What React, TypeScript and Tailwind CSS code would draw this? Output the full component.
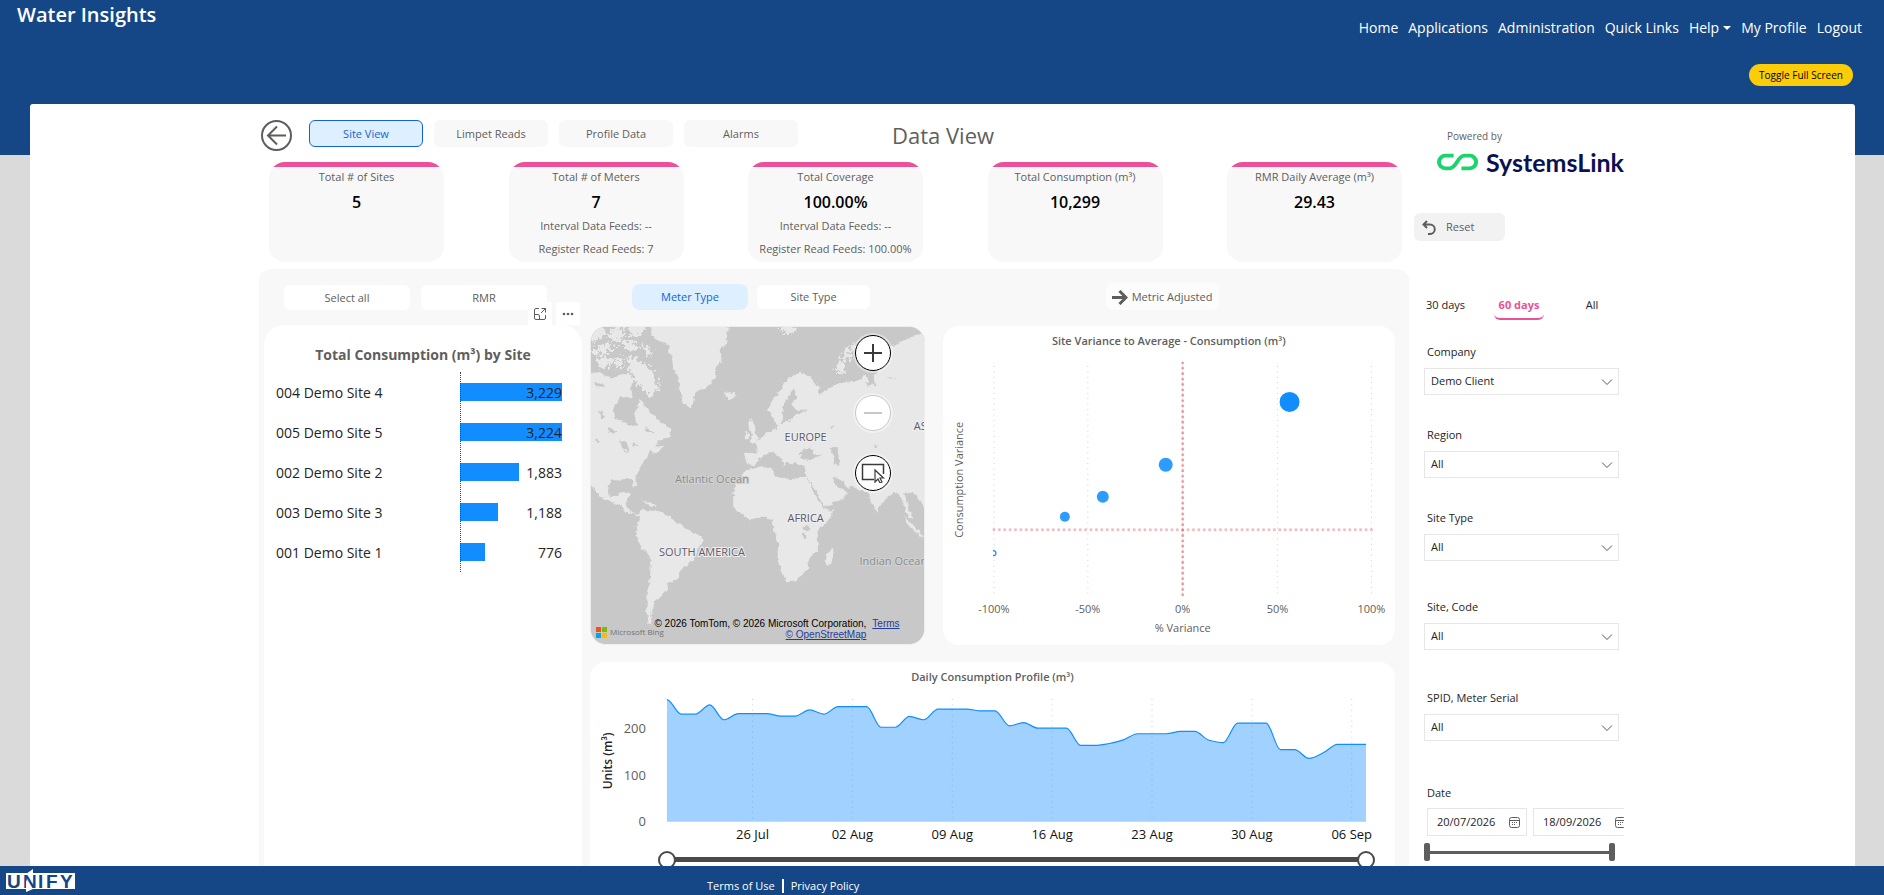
import type { ReactNode } from "react";

type Kpi = {
  title: string;
  value: string;
  lines?: { label: string; value: string }[];
};

const navLinks = ["Home", "Applications", "Administration", "Quick Links", "Help", "My Profile", "Logout"];

const tabs = ["Site View", "Limpet Reads", "Profile Data", "Alarms"];

const kpis: Kpi[] = [
  { title: "Total # of Sites", value: "5" },
  {
    title: "Total # of Meters",
    value: "7",
    lines: [
      { label: "Interval Data Feeds:", value: "--" },
      { label: "Register Read Feeds:", value: "7" },
    ],
  },
  {
    title: "Total Coverage",
    value: "100.00%",
    lines: [
      { label: "Interval Data Feeds:", value: "--" },
      { label: "Register Read Feeds:", value: "100.00%" },
    ],
  },
  { title: "Total Consumption (m³)", value: "10,299" },
  { title: "RMR Daily Average (m³)", value: "29.43" },
];

const sites = [
  { name: "004 Demo Site 4", value: 3229 },
  { name: "005 Demo Site 5", value: 3224 },
  { name: "002 Demo Site 2", value: 1883 },
  { name: "003 Demo Site 3", value: 1188 },
  { name: "001 Demo Site 1", value: 776 },
];

const points = [
  { x: 347, y: 76, r: 10, opacity: 1 },
  { x: 223, y: 139, r: 7, opacity: 0.88 },
  { x: 160, y: 171, r: 6, opacity: 0.88 },
  { x: 122, y: 191, r: 5, opacity: 0.88 },
];

const xTicks = [
  { x: 51, label: "-100%" },
  { x: 145, label: "-50%" },
  { x: 240, label: "0%" },
  { x: 335, label: "50%" },
  { x: 429, label: "100%" },
];

// one reading per day, 20 Jul - 07 Sep
const daily = [
  262, 231, 231, 251, 219, 232, 232, 232, 227, 227, 240, 231, 247, 247, 247, 203, 203, 226, 219, 242,
  242, 242, 238, 238, 206, 213, 201, 201, 201, 164, 164, 168, 176, 189, 189, 189, 194, 194, 175, 170,
  212, 212, 212, 155, 155, 136, 148, 166, 166, 166,
];

const weeks = ["26 Jul", "02 Aug", "09 Aug", "16 Aug", "23 Aug", "30 Aug", "06 Sep"];

const filters = [
  { id: "company", label: "Company", value: "Demo Client", space: "mt-[22px]" },
  { id: "region", label: "Region", value: "All", space: "mt-[30px]" },
  { id: "site-type", label: "Site Type", value: "All", space: "mt-[30px]" },
  { id: "site-code", label: "Site, Code", value: "All", space: "mt-[36px]" },
  { id: "spid", label: "SPID, Meter Serial", value: "All", space: "mt-[38px]" },
];

const X0 = 77;
const STEP = 100 / 7;
const BASE = 137;

function monotonePath(values: number[]) {
  const ys = values.map((v) => BASE - v * 0.4667);
  const slope = ys.map((y, i) => {
    if (i === 0 || i === ys.length - 1) return 0;
    const a = y - ys[i - 1];
    const b = ys[i + 1] - y;
    if (a * b <= 0) return 0;
    return (2 * a * b) / (a + b);
  });
  let d = `M${X0} ${ys[0].toFixed(1)}`;
  for (let i = 1; i < ys.length; i++) {
    const x1 = X0 + STEP * (i - 1);
    const x2 = X0 + STEP * i;
    const t = STEP / 3;
    d += `C${(x1 + t).toFixed(1)} ${(ys[i - 1] + slope[i - 1] / 3).toFixed(1)} ${(x2 - t).toFixed(1)} ${(
      ys[i] - slope[i] / 3
    ).toFixed(1)} ${x2.toFixed(1)} ${ys[i].toFixed(1)}`;
  }
  return d;
}

const linePath = monotonePath(daily);

function Header() {
  return (
    <header className="flex h-[104px] shrink-0 items-start justify-between pl-[17px] text-white">
      <h1 className="text-[20px] leading-[30px] font-semibold">Water Insights</h1>
      <div className="flex flex-col items-end pt-[18px]">
        <nav className="flex gap-[10px] pr-[22px] text-[14px] leading-5">
          {navLinks.map((link) => (
            <a key={link} href="#" className="flex items-center">
              {link}
              {link === "Help" && (
                <span className="ml-1 border-x-4 border-t-4 border-x-transparent border-t-white" />
              )}
            </a>
          ))}
        </nav>
        <button className="mt-[26px] mr-[31px] h-[22px] w-[104px] rounded-full bg-[#fbcc08] text-[10px] text-black">
          Toggle Full Screen
        </button>
      </div>
    </header>
  );
}

function Toolbar() {
  return (
    <div className="flex h-[31px] items-start pl-[2px]">
      <button aria-label="Back" className="mr-[17px]">
        <svg width="31" height="31" viewBox="0 0 31 31" fill="none" stroke="#5f5d5b" strokeWidth="2">
          <circle cx="15.5" cy="15.5" r="14.5" />
          <path d="M25 15.5H7M16 6.500L7 15.500L16 24.500" />
        </svg>
      </button>
      <div className="flex gap-[11px]">
        {tabs.map((tab, i) => (
          <button
            key={tab}
            className={
              i === 0
                ? "h-[27px] w-[114px] rounded-md border border-[#1264d6] bg-[#def0ff] pt-px text-[11px] text-[#1264d6]"
                : "h-[27px] w-[114px] rounded-md bg-[#f8f8f8] pt-px text-[11px] text-[#605e5c]"
            }
          >
            {tab}
          </button>
        ))}
      </div>
      <h2 className="ml-[94px] text-[22px] leading-[31px] text-[#605e5c]">Data View</h2>
    </div>
  );
}

function KpiCard({ kpi }: { kpi: Kpi }) {
  return (
    <div className="h-[100px] w-[175px] overflow-hidden rounded-[16px] bg-[#f8f8f8] text-center text-[11px] text-[#605e5c]">
      <div className="h-[5px] bg-[#ec5197]" />
      <p className="pt-[2px] leading-4">{kpi.title}</p>
      <p className="mt-[7px] mb-[6px] text-[16px] leading-5 font-semibold text-black">{kpi.value}</p>
      {kpi.lines?.map((line) => (
        <p key={line.label} className="mb-[7px] leading-4">
          {line.label} <span className="font-medium">{line.value}</span>
        </p>
      ))}
    </div>
  );
}

function SitePanel() {
  return (
    <section className="relative flex-1 rounded-t-[20px] bg-white px-3 pt-[21px]">
      <div className="absolute -top-[23px] right-[2px] flex gap-1">
        <button aria-label="Focus mode" className="flex h-[23px] w-6 items-center justify-center bg-white">
          <svg width="14" height="14" viewBox="0 0 14 14" fill="none" stroke="#605e5c">
            <path d="M6 1.500H3Q1.500 1.500 1.500 3V11Q1.500 12.500 3 12.500H11Q12.500 12.500 12.500 11V8M1.500 7.500H5Q6.500 7.500 6.500 9V12.500M8.500 1.500H12.500V5.500M12.500 1.500L8 6" />
          </svg>
        </button>
        <button aria-label="More options" className="flex h-[23px] w-6 items-center justify-center bg-white">
          <svg width="12" height="4" viewBox="0 0 12 4" fill="#605e5c">
            <circle cx="2" cy="2" r="1.300" />
            <circle cx="6" cy="2" r="1.300" />
            <circle cx="10" cy="2" r="1.300" />
          </svg>
        </button>
      </div>
      <h3 className="text-center text-[14px] leading-[18px] font-bold text-[#605e5c]">
        Total Consumption (m³) by Site
      </h3>
      <ul className="relative mt-2 text-[14px] text-[#252423]">
        {sites.map((site) => (
          <li key={site.name} className="flex h-10 items-center justify-between pr-2">
            <span>{site.name}</span>
            <div className="grid w-[102px] items-center">
              <div
                className="col-start-1 row-start-1 h-[18px] bg-[#118dff]"
                style={{ width: `${(site.value / 3229) * 100}%` }}
              />
              <span className="col-start-1 row-start-1 text-right">{site.value.toLocaleString("en-GB")}</span>
            </div>
          </li>
        ))}
        <li aria-hidden className="absolute inset-y-0 right-[109px] border-l border-dotted border-[#444]" />
      </ul>
    </section>
  );
}

function WorldMap() {
  return (
    <svg className="h-full w-full" viewBox="0 0 335 318" preserveAspectRatio="xMidYMid slice">
      <defs>
        <filter id="coast" x="0" y="0" width="100%" height="100%">
          <feTurbulence type="fractalNoise" baseFrequency="0.18" numOctaves="3" seed="4" />
          <feDisplacementMap in="SourceGraphic" scale="6" xChannelSelector="R" yChannelSelector="G" />
        </filter>
        <filter id="shore" x="0" y="0" width="100%" height="100%">
          <feTurbulence type="fractalNoise" baseFrequency="0.25" numOctaves="3" seed="9" />
          <feDisplacementMap in="SourceGraphic" scale="16" xChannelSelector="R" yChannelSelector="G" />
        </filter>
      </defs>
      <rect width="335" height="318" fill="#c8c8c8" />
      <g filter="url(#shore)">
        <g transform="scale(.33333) translate(-30 -50)" fill="#e8e8e8">
          <path d="M0 20H60L75 75L45 95L0 90ZM80 60L125 50L135 75L100 95ZM130 30L200 30L190 70L150 80ZM35 110L80 100L110 118L60 135L30 130ZM120 95L160 90L175 115L140 125ZM50 145L90 140L95 165L60 175ZM100 145L120 140L130 160L110 175ZM140 140L175 150L205 165L225 195L235 240L205 262L190 235L165 215L150 185ZM185 105L215 120L205 140Z" />
          <path d="M600 50L640 45L650 65L620 75ZM770 185L785 140L810 105L835 95L830 115L800 150L790 195ZM985 95L1010 85L1020 105Z" />
        </g>
      </g>
      <g filter="url(#coast)">
        <g transform="scale(.33333) translate(-30 -50)" fill="#e8e8e8">
          <path d="M0 190L60 190L95 205L115 195L150 190L160 215L150 240L160 262L120 262L100 290L105 325L135 335L150 350L168 345L165 310L178 270L195 285L215 310L240 335L275 360L265 385L235 392L225 410L250 408L232 430L205 425L195 445L185 470L165 500L172 530L162 532L155 510L120 505L90 515L82 540L95 562L115 560L130 545L150 550L137 580L150 605L175 612L185 600L245 605L270 625L300 640L320 660L365 680L372 695L350 725L340 755L310 775L290 810L260 825L268 840L240 860L225 880L215 905L210 920L218 945L240 955L205 940L198 900L202 860L210 800L212 740L185 715L165 675L180 625L170 612L150 612L120 590L90 575L60 560L45 535L20 515L0 500Z" />
          <path d="M205 30L215 75L240 95L265 105L275 140L280 175L295 200L298 240L310 275L325 292L338 280L345 250L385 230L405 200L410 170L425 150L420 120L440 100L445 30Z" />
          <path d="M433 252L445 247L465 245L470 258L450 268L436 264ZM495 385L497 365L508 370L508 385ZM508 330L520 335L525 365L537 385L530 400L512 398L518 375L510 355Z" />
          <path d="M562 300L575 275L600 240L625 205L660 185L690 195L715 225L720 255L745 235L800 215L845 210L858 190L868 235L885 200L905 165L930 110L985 85L1060 60V600L1034 590L1015 560L990 545L975 550L985 580L1000 625L985 620L965 560L940 545L915 570L903 585L890 608L880 590L868 550L850 540L800 528L795 515L755 500L770 530L800 545L795 565L735 590L705 535L680 500L675 470L640 455L615 468L600 440L580 425L545 440L525 465L498 462L493 430L535 428L525 400L565 365L595 355L580 325Z" />
          <path d="M500 480L560 470L580 478L585 500L620 505L680 500L705 550L735 600L765 598L755 625L715 665L715 720L690 745L680 785L650 815L620 818L605 780L592 735L597 700L580 665L580 630L550 620L510 630L480 610L460 585L460 550L475 510Z" />
          <path d="M760 712L745 725L735 750L742 770L755 760L762 730ZM970 615L1000 645L1034 685L1020 680L990 650ZM185 573L215 580L230 592L205 588Z" />
          <g fill="#c8c8c8">
            <path d="M610 290L625 260L645 235L650 265L635 285L650 300L685 298L650 312L625 335L605 340Z" />
            <path d="M660 430L690 410L705 435L725 440L690 450L665 445ZM750 415L770 410L778 440L780 468L762 465L765 440Z" />
            <path d="M540 455L575 430L600 455L612 480L640 470L675 478L680 500L620 505L590 480L545 470Z" />
            <path d="M668 650L680 648L690 655L678 665ZM668 680L675 665L680 685ZM750 350L765 345L755 358ZM870 210L885 205L892 230ZM925 200L955 210L930 205ZM880 405L900 400L890 412Z" />
            <path d="M40 215L75 225L50 232ZM85 350L110 365L90 372ZM60 300L75 320L62 325ZM120 390L140 400L150 430L128 420ZM155 395L175 405L160 412ZM195 350L225 370L200 368ZM45 385L65 395L48 400Z" />
          </g>
          <path d="M590 420L605 420L630 450L620 458ZM640 435L660 430L665 465L650 462Z" />
        </g>
      </g>
      <g fontSize="11" textAnchor="middle" fill="#5c5a68" stroke="#efefef" strokeWidth="2" paintOrder="stroke">
        <text x="216" y="114">EUROPE</text>
        <text x="216" y="196">AFRICA</text>
        <text x="112" y="230">SOUTH AMERICA</text>
        <text x="331" y="103">AS</text>
        <g fill="#8c8c8c" stroke="#d2d2d2">
          <text x="122" y="156">Atlantic Ocean</text>
          <text x="304" y="239">Indian Ocean</text>
        </g>
      </g>
    </svg>
  );
}

function MapControl({ label, disabled, children }: { label: string; disabled?: boolean; children: ReactNode }) {
  return (
    <button
      aria-label={label}
      disabled={disabled}
      className="flex size-9 items-center justify-center rounded-full border border-black bg-white text-[#3b3a39] ring-2 ring-white/40 disabled:border-[#c8c8c8] disabled:text-[#c8c8c8]"
    >
      {children}
    </button>
  );
}

function MapCard() {
  return (
    <section className="relative h-[319px] overflow-hidden rounded-[16px] border border-[#eee] bg-[#c8c8c8]">
      <WorldMap />
      <div className="absolute top-2 right-[33px] flex flex-col gap-6">
        <MapControl label="Zoom in">
          <svg width="18" height="18" viewBox="0 0 18 18" stroke="currentColor" strokeWidth="2">
            <path d="M9 0V18M0 9H18" />
          </svg>
        </MapControl>
        <MapControl label="Zoom out" disabled>
          <svg width="18" height="18" viewBox="0 0 18 18" stroke="currentColor" strokeWidth="2">
            <path d="M0 9H18" />
          </svg>
        </MapControl>
        <MapControl label="Select area">
          <svg width="24" height="20" viewBox="0 0 24 20" fill="none" stroke="currentColor">
            <path d="M13 16.500H1.500V1.500H22.500V11" strokeWidth="1.500" />
            <path d="M14 7L14 19L17 16L19 20L21 19L19 15H22.500Z" fill="#fff" strokeWidth="1.200" />
          </svg>
        </MapControl>
      </div>
      <div className="absolute bottom-[6px] left-[5px] flex items-center gap-[3px] text-[8px] text-[#737373]">
        <svg width="11" height="11" viewBox="0 0 11 11">
          <path fill="#f25022" d="M0 0h5v5H0z" />
          <path fill="#7fba00" d="M6 0h5v5H6z" />
          <path fill="#00a4ef" d="M0 6h5v5H0z" />
          <path fill="#ffb900" d="M6 6h5v5H6z" />
        </svg>
        Microsoft Bing
      </div>
      <div className="absolute right-6 bottom-[4px] flex gap-[6px] font-[Liberation_Sans] text-[10px] leading-[11px] text-black">
        <p className="text-right">
          © 2026 TomTom, © 2026 Microsoft Corporation,
          <br />
          <a href="#" className="text-[#1f3c9c] underline">
            © OpenStreetMap
          </a>
        </p>
        <a href="#" className="text-[#1f3c9c] underline">
          Terms
        </a>
      </div>
    </section>
  );
}

function VarianceCard() {
  return (
    <section className="flex h-[319px] flex-col rounded-[16px] bg-white">
      <h3 className="h-[30px] pt-[6px] text-center text-[11px] leading-[18px] font-semibold text-[#605e5c]">
        Site Variance to Average - Consumption (m³)
      </h3>
      <svg className="-mt-[30px] w-full" viewBox="0 0 453 319" fill="#605e5c" fontSize="11">
        {xTicks.map((tick) => (
          <g key={tick.label}>
            <line x1={tick.x} x2={tick.x} y1="40" y2="272" stroke="#d0d0d0" strokeDasharray="1 4.400" />
            <text x={tick.x} y="287" textAnchor="middle">
              {tick.label}
            </text>
          </g>
        ))}
        <g stroke="#d64550" strokeWidth="3" strokeLinecap="round" strokeDasharray="0 5.400">
          <path d="M240 37V270" opacity=".5" />
          <path d="M51 204H430" opacity=".35" />
        </g>
        {points.map((p) => (
          <circle key={p.x} cx={p.x} cy={p.y} r={p.r} fill="#118dff" fillOpacity={p.opacity} />
        ))}
        <path d="M50 225A3 2.500 0 1 1 50 230" fill="none" stroke="#118dff" strokeWidth="1.200" />
        <text x="240" y="306" textAnchor="middle">
          % Variance
        </text>
        <text transform="translate(20 154) rotate(-90)" textAnchor="middle">
          Consumption Variance
        </text>
      </svg>
    </section>
  );
}

const roundThumbs =
  "pointer-events-none col-start-1 row-start-1 h-[18px] w-full appearance-none bg-transparent [&::-webkit-slider-thumb]:pointer-events-auto [&::-webkit-slider-thumb]:size-[18px] [&::-webkit-slider-thumb]:appearance-none [&::-webkit-slider-thumb]:rounded-full [&::-webkit-slider-thumb]:border-2 [&::-webkit-slider-thumb]:border-[#4a4a4a] [&::-webkit-slider-thumb]:bg-white";

const barThumbs =
  "pointer-events-none col-start-1 row-start-1 h-[18px] w-full appearance-none bg-transparent [&::-webkit-slider-thumb]:pointer-events-auto [&::-webkit-slider-thumb]:h-[18px] [&::-webkit-slider-thumb]:w-[6px] [&::-webkit-slider-thumb]:appearance-none [&::-webkit-slider-thumb]:rounded-[2px] [&::-webkit-slider-thumb]:bg-[#605e5c]";

function ProfileCard() {
  return (
    <section className="mt-[17px] min-h-[240px] flex-1 rounded-t-[16px] bg-white">
      <h3 className="pt-[7px] text-center text-[11px] leading-[16px] font-semibold text-[#605e5c]">
        Daily Consumption Profile (m³)
      </h3>
      <svg className="w-full" viewBox="0 0 806 164" fontSize="13">
        <path d={`${linePath}V${BASE}H${X0}Z`} fill="#a0d1ff" />
        <path d={linePath} fill="none" stroke="#118dff" strokeWidth="1.200" />
        {weeks.map((week, i) => {
          const x = X0 + STEP * 6 + i * 100;
          return (
            <g key={week}>
              <line x1={x} x2={x} y1="14" y2="137" stroke="#5a8fc4" strokeOpacity=".4" strokeDasharray="1 4.400" />
              <text x={x} y="154" textAnchor="middle" fill="#111">
                {week}
              </text>
            </g>
          );
        })}
        <g textAnchor="end" fill="#605e5c">
          <text x="56" y="48">200</text>
          <text x="56" y="95">100</text>
          <text x="56" y="141">0</text>
        </g>
        <text transform="translate(22 76) rotate(-90)" textAnchor="middle" fill="#252423" fontSize="12" fontWeight="600">
          Units (m³)
        </text>
      </svg>
      <div className="mr-5 ml-[68px] grid items-center pt-[2px]">
        <div className="col-start-1 row-start-1 mx-2 h-[5px] bg-[#4a4a4a]" />
        <input type="range" aria-label="Profile start" defaultValue={0} className={roundThumbs} />
        <input type="range" aria-label="Profile end" defaultValue={100} className={roundThumbs} />
      </div>
    </section>
  );
}

function Panel() {
  return (
    <div className="mt-[7px] grid flex-1 grid-cols-[318fr_805fr] gap-2 rounded-t-[12px] bg-[#f8f8f8] pr-[14px] pl-[5px]">
      <div className="flex flex-col pt-4 text-[11px] text-[#605e5c]">
        <div className="mb-[15px] flex gap-[11px] pl-5">
          <button className="h-[25px] w-[126px] rounded-md bg-white pt-px">Select all</button>
          <button className="h-[25px] w-[126px] rounded-md bg-white pt-px">RMR</button>
        </div>
        <SitePanel />
      </div>
      <div className="flex flex-col pt-[14px]">
        <div className="mb-4 grid h-[27px] grid-cols-[335fr_453fr] items-center gap-[18px] text-[11px] text-[#605e5c]">
          <div className="flex items-center gap-[9px] pl-[42px]">
            <button className="h-[26px] w-[116px] shrink-0 rounded-lg bg-[#def0ff] pt-px text-[#1264d6]">
              Meter Type
            </button>
            <button className="h-6 w-[113px] shrink-0 rounded-md bg-white pt-px">Site Type</button>
          </div>
          <div className="pl-[163px]">
            <button className="flex h-[27px] w-[113px] items-center justify-center gap-1 rounded-md bg-[#fcfcfc] pt-px">
              <svg width="16" height="15" viewBox="0 0 16 15" fill="none" stroke="#5f5d5b" strokeWidth="3">
                <path d="M0 7.500H13M7.500 1L14 7.500L7.500 14" />
              </svg>
              Metric Adjusted
            </button>
          </div>
        </div>
        <div className="grid grid-cols-[335fr_453fr] gap-[18px]">
          <MapCard />
          <VarianceCard />
        </div>
        <ProfileCard />
      </div>
    </div>
  );
}

function CalendarIcon() {
  return (
    <svg width="11" height="11" viewBox="0 0 11 11" fill="none" stroke="#605e5c" className="shrink-0">
      <rect x=".5" y=".5" width="10" height="10" rx="2" />
      <path d="M.5 3.500H10.500M3 5.500H4M5 5.500H6M7 5.500H8M3 7.500H4M5 7.500H6" />
    </svg>
  );
}

function DateBox({ label, value }: { label: string; value: string }) {
  return (
    <div className="flex h-7 w-[100px] shrink-0 items-center border border-[#e6e6e6] pr-[6px] pl-[9px]">
      <input
        aria-label={label}
        defaultValue={value}
        className="w-full min-w-0 bg-transparent text-[11px] text-[#252423] outline-none"
      />
      <button aria-label={`Open ${label}`}>
        <CalendarIcon />
      </button>
    </div>
  );
}

function Sidebar() {
  return (
    <aside className="mr-[2px] flex w-[215px] shrink-0 flex-col overflow-hidden pl-[5px] text-[11px] text-[#252423]">
      <p className="pt-[9px] pl-[33px] text-[10px] leading-[14px] text-[#605e5c]">Powered by</p>
      <div className="mt-[5px] flex h-7 shrink-0 items-center gap-[8px] pl-[23px]">
        <svg width="42" height="18" viewBox="0 0 42 18" fill="none" stroke="#17d66b" strokeWidth="4">
          <path d="M17 2.500H8.500A6.500 6.500 0 0 0 8.500 15.500H13C20 15.500 21 2.500 28 2.500H33.500A6.500 6.500 0 0 1 33.500 15.500H25" />
        </svg>
        <span className="font-[Lato] text-[25px] leading-7 font-bold text-[#0b1150]">SystemsLink</span>
      </div>
      <button className="mt-[37px] flex h-7 w-[91px] shrink-0 items-center gap-[10px] rounded-md bg-[#f2f2f2] pt-px pl-2 text-[#605e5c]">
        <svg width="14" height="15" viewBox="0 0 14 15" fill="none" stroke="#5f5d5b" strokeWidth="2">
          <path d="M5 1L1.500 4.500L5 8M2 4.500H8A4.700 4.700 0 0 1 8 14H6" />
        </svg>
        Reset
      </button>
      <div className="mt-[55px] grid h-[24px] shrink-0 grid-cols-[45px_50px_50px] gap-[23px] pl-3 leading-[18px]">
        <button className="self-start text-left">30 days</button>
        <button className="h-[24px] rounded-b-md border-b-2 border-[#ec5197] pb-1 text-center font-bold text-[#ec5197]">
          60 days
        </button>
        <button className="self-start text-center">All</button>
      </div>
      {filters.map((f) => (
        <div key={f.id} className={`ml-[10px] w-[195px] ${f.space}`}>
          <label htmlFor={f.id} className="block pb-[6px] pl-[3px] leading-[20px]">
            {f.label}
          </label>
          <div className="grid items-center">
            <select
              id={f.id}
              className="col-start-1 row-start-1 h-[27px] w-full appearance-none border border-[#e6e6e6] bg-white px-[6px] outline-none"
            >
              <option>{f.value}</option>
            </select>
            <svg
              className="pointer-events-none col-start-1 row-start-1 mr-[6px] justify-self-end"
              width="12"
              height="8"
              viewBox="0 0 12 8"
              fill="none"
              stroke="#555"
            >
              <path d="M1 1.500L6 6.500L11 1.500" />
            </svg>
          </div>
        </div>
      ))}
      <p className="mt-[42px] pl-[13px] leading-[20px]">Date</p>
      <div className="mt-[5px] flex gap-[6px] pl-[13px]">
        <DateBox label="Start date" value="20/07/2026" />
        <DateBox label="End date" value="18/09/2026" />
      </div>
      <div className="mt-[7px] ml-[10px] grid w-[191px] items-center">
        <div className="col-start-1 row-start-1 h-[3px] bg-[#605e5c]" />
        <input type="range" aria-label="Date from" defaultValue={0} className={barThumbs} />
        <input type="range" aria-label="Date to" defaultValue={100} className={barThumbs} />
      </div>
    </aside>
  );
}

function Footer() {
  return (
    <footer className="flex h-[29px] shrink-0 bg-[#154786] text-[11px] text-white">
      <svg width="70" height="24" viewBox="0 0 70 24" className="mt-[3px] ml-[5px]">
        <path d="M1 4H70V20H1Z" fill="#fff" />
        <g fontSize="19" fontWeight="700" fill="#154786" fontFamily="Liberation Sans">
          <text x="2" y="19">U</text>
          <text x="18" y="19">N</text>
          <text x="33" y="19">I</text>
          <text x="41" y="19">F</text>
          <text x="55" y="19">Y</text>
        </g>
        <path d="M21 5L28 0V11ZM21 11L28 20L21 23Z" fill="#fff" />
      </svg>
      <div className="ml-[632px] flex items-center gap-[7px] pt-[11px]">
        <a href="#">Terms of Use</a>
        <span className="h-[14px] w-[2px] bg-white" />
        <a href="#">Privacy Policy</a>
      </div>
    </footer>
  );
}

export default function App() {
  return (
    <div className="flex h-screen flex-col overflow-hidden bg-[linear-gradient(#154786_155px,#dadada_155px)] font-['Open_Sans',sans-serif]">
      <Header />
      <main className="mr-[29px] ml-[30px] flex min-h-0 flex-1 overflow-hidden rounded-t-[3px] bg-white">
        <div className="mx-auto flex w-full max-w-[1367px] pt-4">
          <div className="flex min-w-0 flex-1 flex-col">
            <Toolbar />
            <div className="mt-[11px] flex justify-between pr-[7px] pl-[10px]">
              {kpis.map((kpi) => (
                <KpiCard key={kpi.title} kpi={kpi} />
              ))}
            </div>
            <Panel />
          </div>
          <Sidebar />
        </div>
      </main>
      <Footer />
    </div>
  );
}
